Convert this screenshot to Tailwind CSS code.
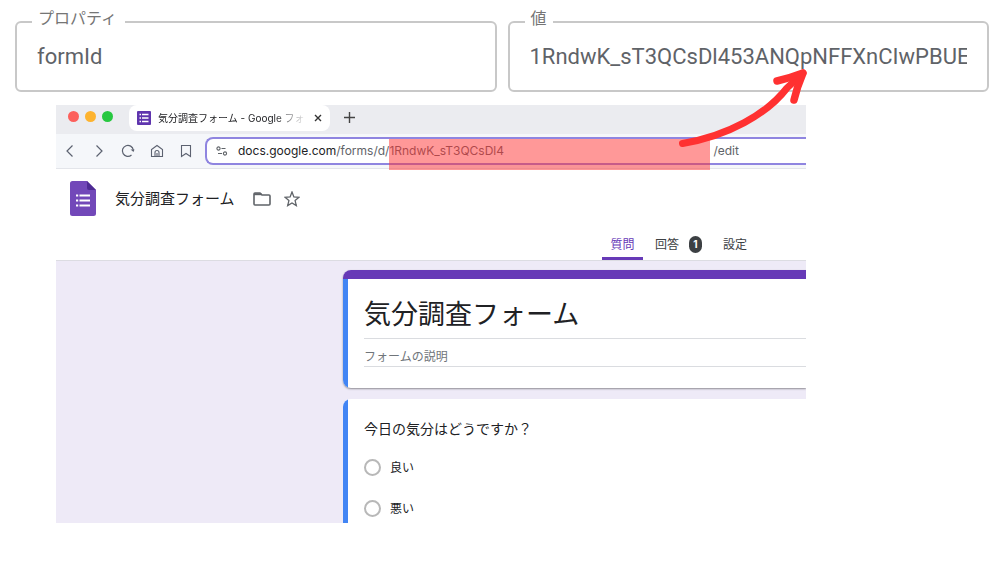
<!DOCTYPE html>
<html lang="ja">
<head>
<meta charset="utf-8">
<title>気分調査フォーム</title>
<script src="https://cdn.jsdelivr.net/npm/@tailwindcss/browser@4"></script>
</head>
<body class="bg-white font-['Inter','Noto_Sans_CJK_JP',sans-serif] text-[#202124]">
<div class="relative overflow-hidden pb-10">

  <form class="grid grid-cols-2 gap-[11px] pl-[15px] pr-[11px] pt-[5px] font-['Roboto','Noto_Sans_CJK_JP',sans-serif] text-[#5f6368]">
    <fieldset class="min-w-0 rounded-md border-2 border-[#c8c8c8] px-[15px] pb-4">
      <legend class="pb-2 pl-[6px] pr-2 pt-0.5 text-base leading-6 text-[#757575]"><label for="prop">プロパティ</label></legend>
      <div class="px-[5px]"><input id="prop" type="text" value="formId" class="block h-[35px] w-full text-[22px] outline-none"></div>
    </fieldset>
    <fieldset class="min-w-0 rounded-md border-2 border-[#c8c8c8] px-[15px] pb-4">
      <legend class="px-[6px] pb-2 pt-0.5 text-base leading-6 text-[#757575]"><label for="val">値</label></legend>
      <div class="px-[5px]"><input id="val" type="text" value="1RndwK_sT3QCsDl453ANQpNFFXnCIwPBUE" class="block h-[35px] w-full text-[22px] outline-none"></div>
    </fieldset>
  </form>

  <div class="ml-14 mt-[13px] w-3/4 overflow-hidden bg-white">
    <div class="flex h-[29px] items-start bg-[#ebecf0]">
      <div class="flex gap-[6px] pl-3 pt-[6px]">
        <span class="size-[11px] rounded-full bg-[#fc605c]"></span>
        <span class="size-[11px] rounded-full bg-[#fdb32f]"></span>
        <span class="size-[11px] rounded-full bg-[#27c840]"></span>
      </div>
      <div class="ml-4 flex h-[26px] w-[201px] items-center rounded-lg bg-white pl-2">
        <svg class="size-[14px] shrink-0" viewBox="0 0 14 14"><rect width="14" height="14" rx="1" fill="#5f35ae"/><path d="M2.5 3.5h1.5M5 3.5h6.5M2.5 7h1.5M5 7h6.5M2.5 10.5h1.5M5 10.5h6.5" stroke="#fff" stroke-width="1.6"/></svg>
        <span class="ml-[7px] w-[146px] overflow-hidden whitespace-nowrap text-[10px] leading-[18px] [mask-image:linear-gradient(to_right,black_115px,transparent_150px)]">気分調査フォーム - Google フォ</span>
        <button type="button" aria-label="タブを閉じる" class="ml-[10px]"><svg class="size-[8px]" viewBox="0 0 8 8"><path d="M1 1l6 6M7 1l-6 6" stroke="#333" stroke-width="1.4"/></svg></button>
      </div>
      <button type="button" aria-label="新しいタブ" class="ml-[14px] mt-[7px]"><svg class="size-[11px]" viewBox="0 0 11 11"><path d="M5.500 0v11M0 5.500h11" stroke="#444" stroke-width="1.4"/></svg></button>
    </div>

    <div class="flex h-[35px] items-center border-b border-[#e3e5ea] bg-[#f5f7fa] text-[#5c6270]">
      <div class="flex items-center gap-[15px] pl-[7px]">
        <button type="button" aria-label="戻る"><svg class="size-[14px]" viewBox="0 0 14 14" fill="none" stroke="currentColor" stroke-width="1.200"><path d="M9.500 1.500L4 7l5.500 5.500"/></svg></button>
        <button type="button" aria-label="進む"><svg class="size-[14px]" viewBox="0 0 14 14" fill="none" stroke="currentColor" stroke-width="1.200"><path d="M4.500 1.500L10 7l-5.500 5.500"/></svg></button>
        <button type="button" aria-label="再読み込み"><svg class="size-[14px]" viewBox="0 0 14 14" fill="none" stroke="currentColor" stroke-width="1.200"><path d="M10.500 11A5.500 5.500 0 1 1 12.300 6"/><path d="M9.500 5.500h4L12.500 8z" fill="currentColor" stroke="none"/></svg></button>
        <button type="button" aria-label="ホーム"><svg class="size-[14px]" viewBox="0 0 14 14" fill="none" stroke="currentColor" stroke-width="1.100"><path d="M1.500 12.500V5.500L7 1.500l5.500 4v7zM5 12.500V8.500a2 2 0 0 1 4 0v4M7 9v3.500"/></svg></button>
        <button type="button" aria-label="ブックマーク"><svg class="size-[14px]" viewBox="0 0 14 14" fill="none" stroke="currentColor" stroke-width="1.100"><path d="M2.500 1.500h9v11L7 9.500l-4.500 3z"/></svg></button>
      </div>
      <div class="ml-3 flex h-7 min-w-0 flex-1 items-center whitespace-nowrap rounded-l-lg border-2 border-r-0 border-[#8f85e0] bg-white pl-[9px] text-xs text-[#5f6368]">
        <svg class="h-[10px] w-3 shrink-0" viewBox="0 0 12 10" fill="none" stroke="currentColor" stroke-width="1.100"><circle cx="2.500" cy="2.500" r="1.600"/><path d="M5.500 2.500h4M2 7.500h4"/><circle cx="9" cy="7.500" r="1.600"/></svg>
        <span class="ml-[10px]"><span class="text-[#202124]">docs.google.com</span>/forms/d/</span>
        <span class="relative w-[324px] shrink-0">1RndwK_sT3QCsDl4<span class="absolute -top-1 left-0 h-[31px] w-[321px] bg-[#ff3131]/50"></span></span>
        <span>/edit</span>
      </div>
    </div>

    <header class="border-b border-[#dcdce2]">
      <div class="flex items-center pl-[14px] pt-3">
        <svg class="h-[35px] w-[26px]" viewBox="0 0 26 35"><path d="M2.500 0H17l9 9v23.500a2.500 2.500 0 0 1-2.500 2.500h-21A2.500 2.500 0 0 1 0 32.500v-30A2.500 2.500 0 0 1 2.500 0z" fill="#7248b9"/><path d="M17 0l9 9h-7a2 2 0 0 1-2-2z" fill="#4e2b93"/><path d="M9.500 14.500H20M9.500 19.500H20M9.500 24.500H20" stroke="#fff" stroke-width="2"/><path d="M6 14.500h2.200M6 19.500h2.200M6 24.500h2.200" stroke="#fff" stroke-width="2.200"/></svg>
        <h1 class="ml-[19px] text-[15px] leading-6">気分調査フォーム</h1>
        <button type="button" aria-label="フォルダに移動" class="ml-[18px]"><svg class="h-[14px] w-[18px]" viewBox="0 0 18 14" fill="none" stroke="#5f6368" stroke-width="1.600"><path d="M1 3V12a1 1 0 0 0 1 1h14a1 1 0 0 0 1-1V4a1 1 0 0 0-1-1H9L7 1H2a1 1 0 0 0-1 1z"/><path d="M1 2.200h7.500" stroke-width="2"/></svg></button>
        <button type="button" aria-label="スターを付ける" class="ml-[13px]"><svg class="size-4" viewBox="0 0 16 16" fill="none" stroke="#5f6368" stroke-width="1.300"><path d="M8 1l1.900 4.900 5.100.4-3.900 3.300 1.200 5L8 11.900l-4.300 2.700 1.200-5L1 6.300l5.100-.4z"/></svg></button>
      </div>
      <nav class="flex h-11 items-end pl-[546px] text-xs text-[#3c4043]">
        <a href="#q" class="flex h-8 w-[41px] justify-center border-b-[3px] border-[#673ab7] pt-2 leading-[18px] text-[#673ab7]">質問</a>
        <a href="#a" class="ml-3 flex h-8 items-start gap-[10px] pt-2 leading-[18px]">回答<span class="h-[17px] w-[13px] rounded-full bg-[#3c4043] text-center text-[10px] font-bold leading-[17px] text-white">1</span></a>
        <a href="#s" class="ml-[21px] h-8 pt-2 leading-[18px]">設定</a>
      </nav>
    </header>

    <main class="bg-[#eeeaf7] pl-[287px] pt-[9px]">
      <section class="overflow-hidden rounded-l-lg bg-white shadow-[0_1px_2px_rgba(0,0,0,0.4)]">
        <div class="h-[9px] bg-[#673ab7]"></div>
        <div class="border-l-[5px] border-[#4285f4] pl-4 pt-4">
          <h2 class="h-[44px] border-b border-[#dadce0] text-[27px] leading-10">気分調査フォーム</h2>
          <p class="mt-[7px] h-[21px] border-b border-[#dadce0] text-xs leading-[22px] text-[#70757a]">フォームの説明</p>
          <div class="h-[21px]"></div>
        </div>
      </section>
      <section class="mt-[11px] overflow-hidden rounded-tl-lg bg-white">
        <div class="border-l-[5px] border-[#4285f4] pb-[5px] pl-4 pt-5">
          <fieldset>
            <legend class="text-[14px] leading-5">今日の気分はどうですか？</legend>
            <label class="mt-[19px] flex h-[19px] items-center gap-[9px] text-xs"><input type="radio" name="mood" class="size-[17px] appearance-none rounded-full border-2 border-[#b8b8b8]">良い</label>
            <label class="mt-[22px] flex h-[19px] items-center gap-[9px] text-xs"><input type="radio" name="mood" class="size-[17px] appearance-none rounded-full border-2 border-[#b8b8b8]">悪い</label>
          </fieldset>
        </div>
      </section>
    </main>
  </div>

  <svg class="pointer-events-none absolute left-[670px] top-[60px] h-[110px] w-[150px]" viewBox="0 0 150 110" fill="none" stroke="#ff3131" stroke-linecap="round" stroke-linejoin="round" stroke-width="7"><path d="M12.500 83.500C58 76 97 54 117 28L133 13"/><path d="M107 21Q120 18 133 13Q127 27 124 40" stroke-width="7.500"/></svg>
</div>
</body>
</html>
